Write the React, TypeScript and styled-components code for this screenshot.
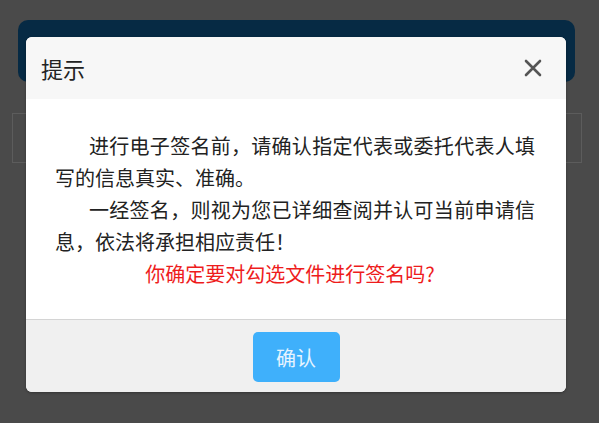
import React from "react";
import styled, { createGlobalStyle } from "styled-components";

const GlobalStyle = createGlobalStyle`
  html, body {
    margin: 0;
    padding: 0;
    background: #4a4a4a;
  }
  body {
    font-family: "Noto Sans CJK SC", "Noto Sans", sans-serif;
  }
`;

const Page = styled.div`
  position: relative;
  width: 599px;
  height: 423px;
  overflow: hidden;
  background: #4a4a4a;
  padding-top: 20px;
  box-sizing: border-box;
`;

const NavyBar = styled.div`
  margin: 0 24px 0 18px;
  height: 62px;
  border-radius: 10px;
  background: #062a44;
`;

const GhostBox = styled.div`
  margin: 31px 17px 0 12px;
  height: 50px;
  border: 1px solid #5c5c5c;
  box-sizing: border-box;
`;

const Dialog = styled.div`
  position: absolute;
  left: 26px;
  top: 37px;
  width: 540px;
  border-radius: 6px;
  overflow: hidden;
  background: #fff;
  box-shadow: 0 1px 3px rgba(0, 0, 0, 0.3);
`;

const Header = styled.div`
  height: 62px;
  background: #f7f7f7;
  display: flex;
  align-items: center;
  justify-content: space-between;
  padding: 0 24px 0 15px;
`;

const Title = styled.div`
  font-size: 22px;
  color: #222;
  line-height: 1;
`;

const CloseButton = styled.button`
  border: none;
  background: transparent;
  padding: 0;
  width: 18px;
  height: 18px;
  display: flex;
  cursor: pointer;
`;

const Body = styled.div`
  padding: 31px 31px 29px 29px;
  font-size: 20px;
  line-height: 32px;
  color: #222;
`;

const Para = styled.p`
  margin: 0;
  text-indent: 34px;
  text-align: justify;
`;

const Warn = styled.p`
  margin: 0;
  text-align: center;
  color: #ee1c1c;
  padding-right: 10px;
`;

const Footer = styled.div`
  border-top: 1px solid #d4d4d4;
  background: #f0f0f0;
  display: flex;
  justify-content: center;
  padding: 12px 0 10px;
`;

const ConfirmButton = styled.button`
  width: 87px;
  height: 50px;
  border: none;
  border-radius: 5px;
  background: #3fb0fb;
  color: #e6f4ff;
  font-family: inherit;
  font-size: 20px;
  cursor: pointer;
`;

export default function App() {
  return (
    <Page>
      <GlobalStyle />
      <NavyBar />
      <GhostBox />
      <Dialog>
        <Header>
          <Title>提示</Title>
          <CloseButton aria-label="close">
            <svg width="18" height="18" viewBox="0 0 18 18">
              <path d="M2 2 L16 16 M16 2 L2 16" stroke="#555" strokeWidth="2.6" strokeLinecap="round" />
            </svg>
          </CloseButton>
        </Header>
        <Body>
          <Para>进行电子签名前，请确认指定代表或委托代表人填写的信息真实、准确。</Para>
          <Para>一经签名，则视为您已详细查阅并认可当前申请信息，依法将承担相应责任！</Para>
          <Warn>你确定要对勾选文件进行签名吗?</Warn>
        </Body>
        <Footer>
          <ConfirmButton>确认</ConfirmButton>
        </Footer>
      </Dialog>
    </Page>
  );
}
